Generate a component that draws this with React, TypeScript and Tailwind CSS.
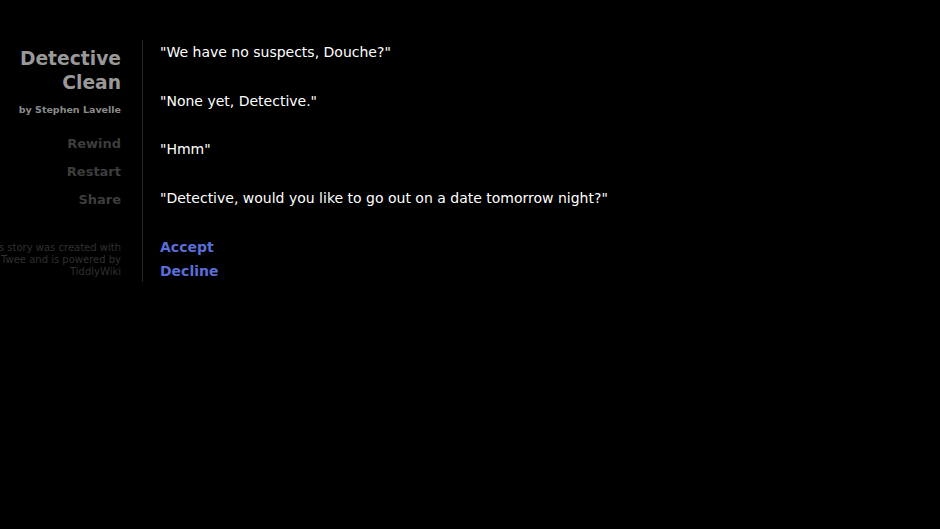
const passages = [
  '"We have no suspects, Douche?"',
  '"None yet, Detective."',
  '"Hmm"',
  '"Detective, would you like to go out on a date tomorrow night?"',
];

const menu = ["Rewind", "Restart", "Share"];

export default function App() {
  return (
    <div
      className="min-h-[529px] w-full bg-black overflow-hidden"
      style={{ fontFamily: '"DejaVu Sans", Verdana, sans-serif' }}
    >
      <div className="flex pt-[40px]">
        <div className="w-[143px] shrink-0 border-r border-[#262626] pr-[21px] pb-[4px] text-right">
          <h1 className="mt-[7px] text-[18.7px] font-bold leading-[24px] text-[#999]">
            Detective Clean
          </h1>
          <div className="mt-[8px] text-[9.5px] font-bold text-[#8a8a8a]">by Stephen Lavelle</div>
          <ul className="mt-[17px] flex flex-col gap-[9px]">
            {menu.map((item) => (
              <li key={item} className="text-[13px] font-bold leading-[19px] text-[#3d3d3d]">
                {item}
              </li>
            ))}
          </ul>
          <p className="mt-[33px] -ml-[60px] text-[10px] leading-[12px] text-[#303030] whitespace-nowrap">
            This story was created with
            <br />
            Twee and is powered by
            <br />
            TiddlyWiki
          </p>
        </div>
        <div className="pl-[17px] pt-[2px] text-[14px] text-white">
          {passages.map((p, i) => (
            <p key={p} className={i === 1 ? "mb-[28px] leading-[20px]" : "mb-[29px] leading-[20px]"}>
              {p}
            </p>
          ))}
          <div className="flex flex-col gap-[4px] text-[14px] font-bold leading-[20px] text-[#5a6ed8]">
            <a>Accept</a>
            <a>Decline</a>
          </div>
        </div>
      </div>
    </div>
  );
}
